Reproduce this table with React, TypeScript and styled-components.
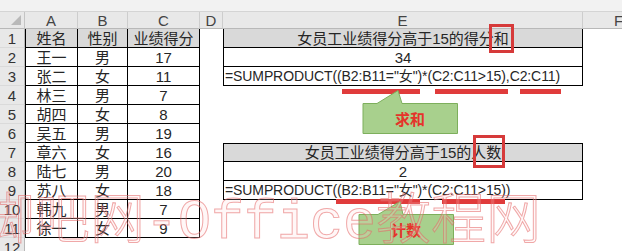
import React from "react";
import styled, { createGlobalStyle } from "styled-components";

const GlobalStyle = createGlobalStyle`
  html, body {
    margin: 0;
    padding: 0;
    background: #fff;
    overflow: hidden;
  }
  body {
    width: 622px;
    height: 251px;
    font-family: "Liberation Sans", "Noto Sans CJK SC", sans-serif;
  }
`;

const Sheet = styled.div`
  position: relative;
  width: 622px;
  height: 251px;
  overflow: hidden;
  background: #fff;
`;

const TopStrip = styled.div`
  height: 11px;
  background: #f2f2f2;
  border-bottom: 1px solid #d4d4d4;
`;

const Grid = styled.div`
  display: grid;
  grid-template-columns: 25px 53px 50px 72px 23px 360px 72px;
  grid-template-rows: 17px repeat(12, 19px);
`;

const Corner = styled.div`
  position: relative;
  background: #e8e8e8;
  border-right: 1px solid #c4c4c4;
  border-bottom: 1px solid #b8b8b8;
  &::after {
    content: "";
    position: absolute;
    right: 3px;
    bottom: 3px;
    border-left: 10px solid transparent;
    border-bottom: 10px solid #b9b9b9;
  }
`;

const ColHead = styled.div`
  box-sizing: border-box;
  display: flex;
  align-items: center;
  justify-content: center;
  background: #e8e8e8;
  border-right: 1px solid #cdcdcd;
  border-bottom: 1px solid #b8b8b8;
  color: #444;
  font-size: 15px;
  line-height: 1;
  padding-top: 1px;
`;

const RowHead = styled.div`
  box-sizing: border-box;
  display: flex;
  align-items: center;
  justify-content: center;
  background: #e8e8e8;
  border-right: 1px solid #b8b8b8;
  border-bottom: 1px solid #dadada;
  color: #333;
  font-size: 15px;
  line-height: 1;
`;

const Cell = styled.div<{
  $boxed?: boolean;
  $left?: boolean;
  $top?: boolean;
  $fill?: boolean;
  $align?: "left" | "center";
}>`
  box-sizing: border-box;
  display: flex;
  align-items: center;
  justify-content: ${(p) => (p.$align === "left" ? "flex-start" : "center")};
  padding: 0 1px;
  white-space: nowrap;
  background: ${(p) => (p.$fill ? "#d9d9d9" : "#fff")};
  border-right: ${(p) => (p.$boxed ? "1px solid #000" : "none")};
  border-bottom: ${(p) => (p.$boxed ? "1px solid #000" : "none")};
  border-left: ${(p) => (p.$left ? "1px solid #000" : "none")};
  border-top: ${(p) => (p.$top ? "1px solid #000" : "none")};
  color: #262626;
  font-size: 15px;
  line-height: 1;
`;

const Formula = styled.span`
  font-size: 14px;
  letter-spacing: -0.1px;
`;

// annotations drawn over the sheet
const RedBox = styled.div<{ $x: number; $y: number; $w: number; $h: number }>`
  position: absolute;
  left: ${(p) => p.$x}px;
  top: ${(p) => p.$y}px;
  width: ${(p) => p.$w}px;
  height: ${(p) => p.$h}px;
  box-sizing: border-box;
  border: 3px solid #d63a3a;
`;

const RedBar = styled.div<{ $x: number; $y: number; $w: number }>`
  position: absolute;
  left: ${(p) => p.$x}px;
  top: ${(p) => p.$y}px;
  width: ${(p) => p.$w}px;
  height: 5px;
  background: #e03b3b;
`;

const CalloutWrap = styled.div<{ $x: number; $y: number }>`
  position: absolute;
  left: ${(p) => p.$x}px;
  top: ${(p) => p.$y}px;
  width: 97px;
  height: 46px;
`;

const CalloutLabel = styled.span`
  position: absolute;
  left: 1px;
  right: 2px;
  top: 15px;
  bottom: 2px;
  display: flex;
  align-items: center;
  justify-content: center;
  color: #e5332a;
  font-family: "Noto Sans CJK SC", sans-serif;
  font-weight: 700;
  font-size: 15px;
  line-height: 1;
`;

const Watermark = styled.div`
  position: absolute;
  left: -20px;
  top: 187px;
  white-space: nowrap;
  font-size: 55px;
  line-height: 1;
  color: rgba(255, 215, 215, 0.2);
  -webkit-text-stroke: 1px rgba(228, 100, 100, 0.55);
  pointer-events: none;
`;

const WmCjk = styled.span`
  font-family: "Noto Sans CJK SC", sans-serif;
  font-weight: 300;
`;

const WmLatin = styled.span`
  font-family: "Liberation Mono", monospace;
`;

type Person = { name: string; sex: string; score: number };

const people: Person[] = [
  { name: "王一", sex: "男", score: 17 },
  { name: "张二", sex: "女", score: 11 },
  { name: "林三", sex: "男", score: 7 },
  { name: "胡四", sex: "女", score: 8 },
  { name: "吴五", sex: "男", score: 19 },
  { name: "章六", sex: "女", score: 16 },
  { name: "陆七", sex: "男", score: 20 },
  { name: "苏八", sex: "女", score: 18 },
  { name: "韩九", sex: "男", score: 7 },
  { name: "徐一", sex: "女", score: 9 },
];

// what goes in column E, by row number
const eCol: Record<number, { text: string; kind: "head" | "value" | "formula" }> = {
  1: { text: "女员工业绩得分高于15的得分和", kind: "head" },
  2: { text: "34", kind: "value" },
  3: { text: '=SUMPRODUCT((B2:B11="女")*(C2:C11>15),C2:C11)', kind: "formula" },
  7: { text: "女员工业绩得分高于15的人数", kind: "head" },
  8: { text: "2", kind: "value" },
  9: { text: '=SUMPRODUCT((B2:B11="女")*(C2:C11>15))', kind: "formula" },
};

const Callout = ({
  x,
  y,
  base,
  tip,
  label,
}: {
  x: number;
  y: number;
  base: [number, number];
  tip: number;
  label: string;
}) => (
  <CalloutWrap $x={x} $y={y}>
    <svg width="97" height="46" viewBox="0 0 97 46">
      <path
        d={`M1 14.5 H${base[0]} L${tip} 1.5 L${base[1]} 14.5 H95.5 V44.5 H1 Z`}
        fill="#a8d08d"
        stroke="#7daf5c"
        strokeWidth="1"
      />
    </svg>
    <CalloutLabel>{label}</CalloutLabel>
  </CalloutWrap>
);

const SheetRow = ({ r }: { r: number }) => {
  const p = r >= 2 && r <= 11 ? people[r - 2] : null;
  const inTable = r >= 1 && r <= 11;
  const e = eCol[r];
  return (
    <>
      <RowHead>{r}</RowHead>
      <Cell $boxed={inTable} $left={inTable} $fill={r === 1}>
        {r === 1 ? "姓名" : p?.name}
      </Cell>
      <Cell $boxed={inTable} $fill={r === 1}>
        {r === 1 ? "性别" : p?.sex}
      </Cell>
      <Cell $boxed={inTable} $fill={r === 1}>
        {r === 1 ? "业绩得分" : p?.score}
      </Cell>
      <Cell />
      <Cell
        $boxed={!!e}
        $left={!!e}
        $top={r === 7}
        $fill={e?.kind === "head"}
        $align={e?.kind === "formula" ? "left" : "center"}
      >
        {e && (e.kind === "formula" ? <Formula>{e.text}</Formula> : e.text)}
      </Cell>
      <Cell />
    </>
  );
};

export default function App() {
  const rows = Array.from({ length: 12 }, (_, i) => i + 1);
  return (
    <Sheet>
      <GlobalStyle />
      <TopStrip />
      <Grid>
        <Corner />
        {["A", "B", "C", "D", "E", "F"].map((c) => (
          <ColHead key={c}>{c}</ColHead>
        ))}
        {rows.map((r) => (
          <SheetRow key={r} r={r} />
        ))}
      </Grid>

      <RedBox $x={489} $y={24} $w={25} $h={29} />
      <RedBar $x={342} $y={89} $w={78} />
      <RedBar $x={435} $y={89} $w={73} />
      <RedBar $x={520} $y={89} $w={41} />
      <Callout x={362} y={89} base={[15, 40]} tip={36} label="求和" />

      <RedBox $x={473} $y={135} $w={32} $h={33} />
      <RedBar $x={336} $y={199} $w={84} />
      <RedBar $x={442} $y={199} $w={63} />
      <Callout x={358} y={200} base={[20, 45]} tip={42} label="计数" />

      <Watermark>
        <WmCjk>脚吧网</WmCjk>
        <WmLatin>-Office</WmLatin>
        <WmCjk>教程网</WmCjk>
      </Watermark>
    </Sheet>
  );
}
